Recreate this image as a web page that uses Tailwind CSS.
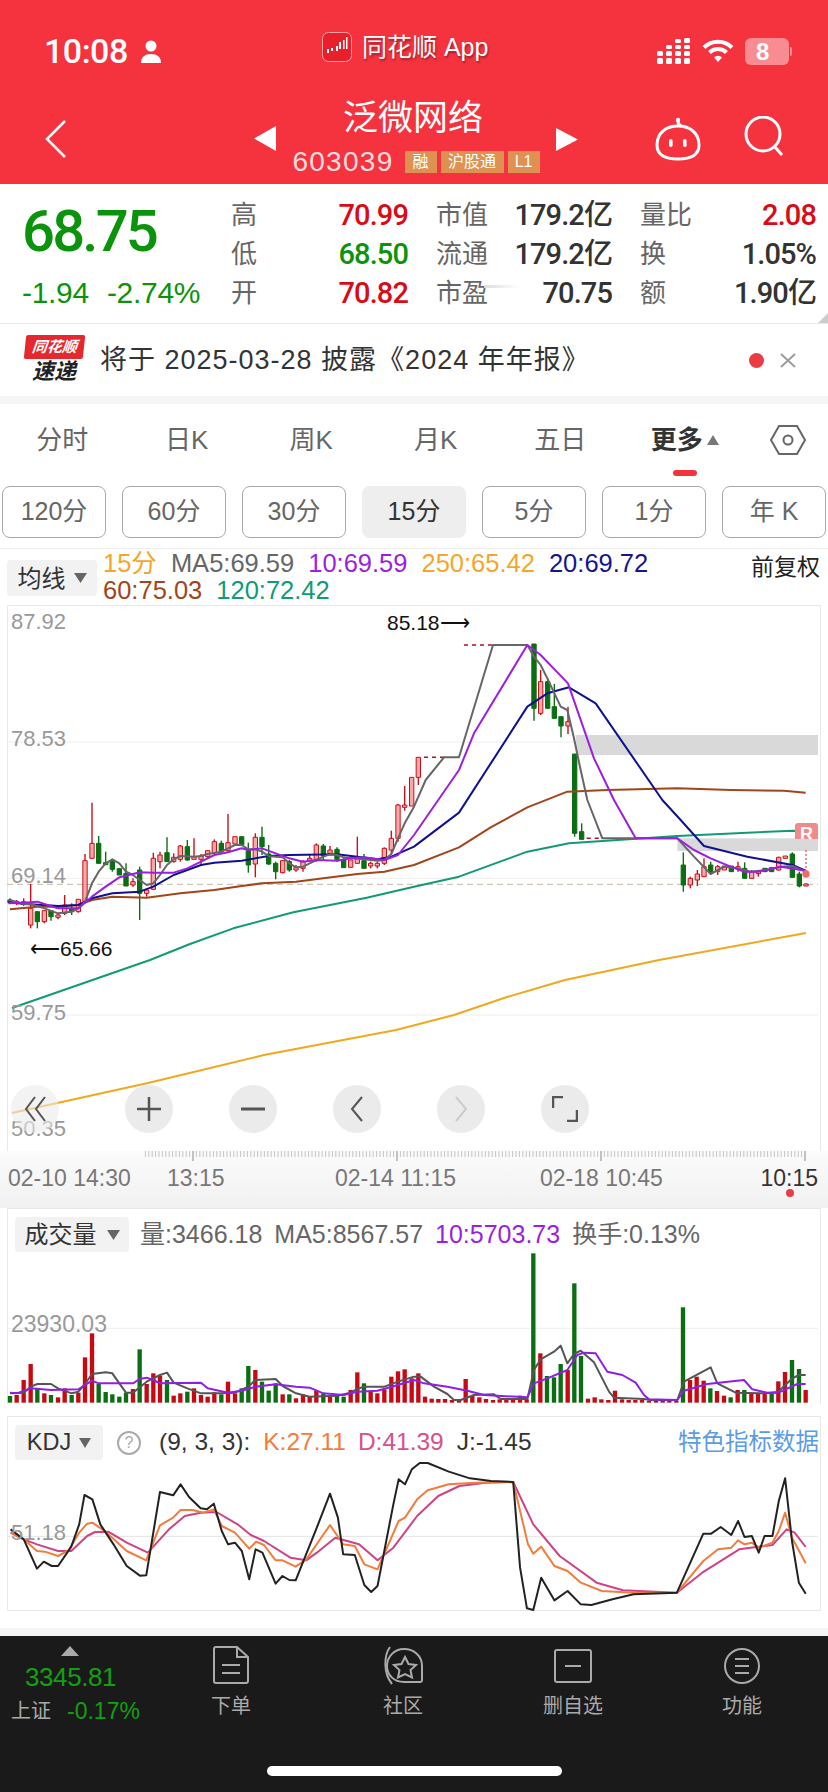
<!DOCTYPE html>
<html lang="zh-CN">
  <head>
    <meta charset="UTF-8" />
    <meta name="viewport" content="width=device-width, initial-scale=1.0" />
    <script src="https://cdn.jsdelivr.net/npm/@tailwindcss/browser@4"></script>
    <title>泛微网络</title>
  </head>
  <body class="w-[828px] h-[1792px] overflow-hidden flex flex-col bg-white font-['Liberation_Sans','Noto_Sans_CJK_SC',sans-serif]">
    <!-- red header -->
    <header class="h-[184px] shrink-0 bg-[#f4333f] text-white flex flex-col">
      <div class="h-[96px] grid grid-cols-[322px_auto_1fr] items-center pt-[6px]">
        <div class="flex items-center gap-[12px] pl-[44px]">
          <span class="text-[34px] font-['Roboto'] font-medium tracking-[-0.500px]">10:08</span>
          <svg width="22" height="23" viewBox="0 0 22 23" fill="#fff"><circle cx="11" cy="6" r="5.5" /><path d="M1 23c0-6 4-9 10-9s10 3 10 9z" /></svg>
        </div>
        <div class="flex items-center gap-[10px] -mt-[8px]">
          <svg width="30" height="30" viewBox="0 0 30 30"><rect x="0.5" y="0.5" width="29" height="29" rx="6" fill="#e8202c" stroke="#f9a0a5" /><path d="M5 17h2v4H5zM9 16h2v3H9zM14 14h2v5h-2zM17 10h2v7h-2zM21 8h1.500v9H21zM24 5h1.500v12H24z" fill="#fff" /></svg>
          <span class="text-[25px] leading-none [text-shadow:1px_2px_2px_rgba(0,0,0,0.35)]">同花顺 App</span>
        </div>
        <div class="flex items-center justify-end pr-[36px] gap-[11px]">
          <svg width="34" height="26" viewBox="0 0 34 26" fill="#fff">
            <rect x="0" y="20" width="6" height="6" rx="1.500" /><rect x="9" y="20" width="6" height="6" rx="1.500" /><rect x="18" y="20" width="6" height="6" rx="1.500" /><rect x="27" y="20" width="6" height="6" rx="1.500" />
            <rect x="0" y="13" width="6" height="5" rx="1.500" /><rect x="9" y="13" width="6" height="5" rx="1.500" /><rect x="18" y="13" width="6" height="5" rx="1.500" /><rect x="27" y="13" width="6" height="5" rx="1.500" />
            <rect x="9" y="7" width="6" height="4" rx="1.500" /><rect x="18" y="7" width="6" height="4" rx="1.500" /><rect x="27" y="7" width="6" height="4" rx="1.500" /><rect x="18" y="1" width="6" height="4" rx="1.500" /><rect x="27" y="0" width="6" height="5" rx="1.500" />
          </svg>
          <svg width="32" height="24" viewBox="0 0 32 24" fill="none" stroke="#fff" stroke-width="4"><path d="M2 8.500a20 20 0 0 1 28 0" /><path d="M7.500 13.500a12 12 0 0 1 17 0" /><path d="M16 23l-4-4.500a5.500 5.500 0 0 1 8 0z" fill="#fff" stroke="none" /></svg>
          <div class="flex items-center gap-[1px]">
            <div class="w-[44px] h-[27px] rounded-[6px] bg-[#f88c92] text-[24px] font-bold leading-[27px] pl-[11px]">8</div>
            <div class="w-[2px] h-[9px] rounded-r bg-[#f88c92]"></div>
          </div>
        </div>
      </div>
      <div class="h-[88px] grid grid-cols-[254px_324px_1fr]">
        <div class="pl-[45px] pt-[24px]">
          <svg width="22" height="38" viewBox="0 0 22 38" fill="none" stroke="#fff" stroke-width="2.500"><path d="M20 1L2 19l18 18" /></svg>
        </div>
        <div class="flex justify-between">
          <svg class="mt-[30px]" width="22" height="25" viewBox="0 0 22 25" fill="#fff"><path d="M22 0v25L0 12.500z" /></svg>
          <div class="flex flex-col items-center">
            <div class="h-[44px] text-[35px] leading-[44px] pr-[6px]">泛微网络</div>
            <div class="h-[44px] flex items-center gap-[4px]">
              <span class="text-[28px] tracking-[1.300px] mr-[7px] text-[#fbdcde]">603039</span>
              <span class="h-[22px] w-[32px] bg-[#de9150] text-[16px] leading-[22px] text-center">融</span>
              <span class="h-[22px] w-[63px] bg-[#de9150] text-[16px] leading-[22px] text-center">沪股通</span>
              <span class="h-[22px] w-[32px] bg-[#de9150] text-[16px] leading-[22px] text-center">L1</span>
            </div>
          </div>
          <svg class="mt-[32px]" width="22" height="23" viewBox="0 0 22 23" fill="#fff"><path d="M0 0v23l22-11.500z" /></svg>
        </div>
        <div class="flex pl-[77px] gap-[43px] pt-[21px]">
          <svg width="46" height="44" viewBox="0 0 46 44" fill="none" stroke="#fff" stroke-width="3"><circle cx="23" cy="3" r="2.200" fill="#fff" stroke="none" /><path d="M23 4c0 3 1 4 3 5" /><path d="M2 28C2 16 11 9 23 9s21 7 21 19c0 9-7 14-21 14S2 37 2 28z" /><rect x="14" y="22" width="3.600" height="8" rx="1.800" fill="#fff" stroke="none" /><rect x="28" y="22" width="3.600" height="8" rx="1.800" fill="#fff" stroke="none" /></svg>
          <svg class="-mt-[1px]" width="40" height="40" viewBox="0 0 40 40" fill="none" stroke="#fff" stroke-width="3"><circle cx="19" cy="18" r="17" /><path d="M31 31l7 8" /></svg>
        </div>
      </div>
    </header>

    <!-- quote summary -->
    <section class="relative h-[140px] shrink-0 border-b border-[#e8e8e8] flex">
      <div class="w-[231px] pl-[22px] text-[#0b930b]">
        <div class="h-[92px] pt-[16px] text-[58px] font-['Roboto'] font-medium leading-[62px] tracking-[-2.800px] whitespace-nowrap">68.75</div>
        <div class="flex gap-[18px] text-[30px] leading-[34px] tracking-[-0.300px] whitespace-nowrap"><span>-1.94</span><span>-2.74%</span></div>
      </div>
      <div class="flex-1 grid grid-cols-[177px_176px_176px] gap-x-[28px] grid-rows-[39px_39px_39px] pt-[12px] text-[26px] leading-[39px] text-[#666] whitespace-nowrap">
        <div class="flex justify-between"><span>高</span><span class="text-[29px] font-['Roboto'] font-medium text-[#d90b17] tracking-[-0.900px]">70.99</span></div>
        <div class="flex justify-between"><span>市值</span><span class="text-[29px] font-['Roboto','Noto_Sans_CJK_SC'] font-medium text-[#333] tracking-[-0.900px]">179.2亿</span></div>
        <div class="flex justify-between"><span>量比</span><span class="text-[29px] font-['Roboto'] font-medium text-[#d90b17] tracking-[-0.900px]">2.08</span></div>
        <div class="flex justify-between"><span>低</span><span class="text-[29px] font-['Roboto'] font-medium text-[#0b930b] tracking-[-0.900px]">68.50</span></div>
        <div class="flex justify-between"><span>流通</span><span class="text-[29px] font-['Roboto','Noto_Sans_CJK_SC'] font-medium text-[#333] tracking-[-0.900px]">179.2亿</span></div>
        <div class="flex justify-between"><span>换</span><span class="text-[29px] font-['Roboto'] font-medium text-[#333] tracking-[-0.900px]">1.05%</span></div>
        <div class="flex justify-between"><span>开</span><span class="text-[29px] font-['Roboto'] font-medium text-[#d90b17] tracking-[-0.900px]">70.82</span></div>
        <div class="flex justify-between"><span>市盈</span><span class="text-[29px] font-['Roboto'] font-medium text-[#333] tracking-[-0.900px]">70.75</span></div>
        <div class="flex justify-between"><span>额</span><span class="text-[29px] font-['Roboto','Noto_Sans_CJK_SC'] font-medium text-[#333] tracking-[-0.900px]">1.90亿</span></div>
      </div>
      <div class="absolute left-[484px] top-[101px] w-[36px] h-[3px] bg-gradient-to-r from-[#ddd] to-transparent"></div>
      <svg class="absolute right-0 bottom-0" width="10" height="10" viewBox="0 0 10 10" fill="#ccc"><path d="M10 0v10H0z" /></svg>
    </section>

    <!-- notice -->
    <section class="h-[72px] shrink-0 flex items-center pl-[24px] pr-[32px]">
      <div class="w-[60px] flex flex-col items-center">
        <div class="w-[59px] h-[24px] bg-[#e4282e] rounded-[2px] -skew-x-[6deg] text-white text-[15px] font-bold italic leading-[24px] text-center whitespace-nowrap">同花顺</div>
        <div class="text-[#222] text-[22px] font-bold italic leading-[26px]">速递</div>
      </div>
      <div class="ml-[16px] text-[27px] tracking-[1px] text-[#333] whitespace-nowrap">将于 2025-03-28 披露《2024 年年报》</div>
      <div class="ml-auto w-[15px] h-[15px] rounded-full bg-[#ea3c42]"></div>
      <svg class="ml-[16px]" width="16" height="15" viewBox="0 0 16 15" fill="none" stroke="#999" stroke-width="1.800"><path d="M1 1l14 13M15 1L1 14" /></svg>
    </section>
    <div class="h-[8px] shrink-0 bg-[#f5f5f5]"></div>

    <!-- period tabs -->
    <nav class="h-[72px] shrink-0 grid grid-cols-[repeat(6,124.500px)_1fr] items-center text-[26px] text-[#666] text-center">
      <div>分时</div>
      <div>日K</div>
      <div>周K</div>
      <div>月K</div>
      <div>五日</div>
      <div class="relative h-full flex items-center justify-center gap-[4px] font-bold text-[#333]">更多
        <svg width="12" height="10" viewBox="0 0 12 10" fill="#777"><path d="M6 0l6 10H0z" /></svg>
        <div class="absolute bottom-0 left-[50px] w-[24px] h-[6px] rounded-[3px] bg-[#f4333f]"></div>
      </div>
      <div class="flex justify-center">
        <svg width="36" height="30" viewBox="0 0 36 30" fill="none" stroke="#666" stroke-width="2"><path d="M9 1h18l8 14-8 14H9L1 15z" /><circle cx="18" cy="15" r="4.500" /></svg>
      </div>
    </nav>
    <div class="h-[52px] mt-[10px] shrink-0 flex gap-[16px] pl-[2px] text-[25px] text-[#666]">
      <div class="w-[104px] rounded-[8px] border border-[#aaa] flex items-center justify-center">120分</div>
      <div class="w-[104px] rounded-[8px] border border-[#aaa] flex items-center justify-center">60分</div>
      <div class="w-[104px] rounded-[8px] border border-[#aaa] flex items-center justify-center">30分</div>
      <div class="w-[104px] rounded-[8px] bg-[#eeeeee] text-[#333] flex items-center justify-center">15分</div>
      <div class="w-[104px] rounded-[8px] border border-[#aaa] flex items-center justify-center">5分</div>
      <div class="w-[104px] rounded-[8px] border border-[#aaa] flex items-center justify-center">1分</div>
      <div class="w-[104px] rounded-[8px] border border-[#aaa] flex items-center justify-center">年 K</div>
    </div>

    <!-- MA legend -->
    <div class="h-[57px] mt-[10px] shrink-0 border-t border-[#eee] relative text-[25.500px] leading-[27px] whitespace-nowrap">
      <div class="absolute left-[7px] top-[11px] w-[90px] h-[36px] rounded-[4px] bg-[#f2f2f2] flex items-center justify-center gap-[8px] text-[24px] text-[#333]">均线
        <svg width="13" height="10" viewBox="0 0 13 10" fill="#666"><path d="M0 0h13L6.500 10z" /></svg>
      </div>
      <div class="pl-[103px] pt-[1px]">
        <div class="flex gap-[14px]">
          <span class="text-[#f4a62a]">15分</span><span class="text-[#666]">MA5:69.59</span><span class="text-[#9b1fe0]">10:69.59</span><span class="text-[#f4a62a]">250:65.42</span><span class="text-[#15158f]">20:69.72</span>
        </div>
        <div class="flex gap-[14px]">
          <span class="text-[#a0461a]">60:75.03</span><span class="text-[#129a75]">120:72.42</span>
        </div>
      </div>
      <div class="absolute right-[8px] top-[5px] text-[23px] leading-[27px] text-[#222]">前复权</div>
    </div>

    <!-- candle chart -->
    <section class="relative h-[546px] shrink-0 mx-[7px] border-x border-t border-[#e8e8e8]">
      <svg id="kline" class="absolute -left-px -top-px" width="811" height="546" viewBox="21 15 2433 1638"></svg>
      <span class="absolute left-[3px] top-[3px] text-[22px] leading-[26px] text-[#999]">87.92</span>
      <span class="absolute left-[3px] top-[120px] text-[22px] leading-[26px] text-[#999]">78.53</span>
      <span class="absolute left-[3px] top-[257px] text-[22px] leading-[26px] text-[#999]">69.14</span>
      <span class="absolute left-[3px] top-[394px] text-[22px] leading-[26px] text-[#999]">59.75</span>
      <span class="absolute left-[3px] top-[510px] text-[22px] leading-[26px] text-[#999]">50.35</span>
      <span class="absolute left-[379px] top-[4px] text-[21px] leading-[26px] text-[#111] whitespace-nowrap">85.18⟶</span>
      <span class="absolute left-[22px] top-[330px] text-[21px] leading-[26px] text-[#111] whitespace-nowrap">⟵65.66</span>
      <div class="absolute left-[787px] top-[217px] w-[23px] h-[16px] rounded-t-[3px] bg-[#f28a8a] overflow-hidden text-white text-[18px] font-bold leading-[22px] text-center">R</div>
      <div class="absolute left-[3px] top-[479px] flex items-center gap-[56px]">
        <div class="w-[48px] h-[48px] rounded-full bg-[#ebebeb]/60 flex items-center justify-center mr-[10px]">
          <svg width="24" height="28" viewBox="0 0 24 28" fill="none" stroke="#555" stroke-width="2"><path d="M12 2L3 14l9 12M22 2l-9 12 9 12" /></svg>
        </div>
        <div class="w-[48px] h-[48px] rounded-full bg-[#ebebeb] flex items-center justify-center">
          <svg width="24" height="24" viewBox="0 0 24 24" fill="none" stroke="#555" stroke-width="2.500"><path d="M12 0v24M0 12h24" /></svg>
        </div>
        <div class="w-[48px] h-[48px] rounded-full bg-[#ebebeb] flex items-center justify-center">
          <svg width="24" height="4" viewBox="0 0 24 4" fill="none" stroke="#555" stroke-width="3"><path d="M0 2h24" /></svg>
        </div>
        <div class="w-[48px] h-[48px] rounded-full bg-[#ebebeb] flex items-center justify-center">
          <svg width="14" height="26" viewBox="0 0 14 26" fill="none" stroke="#555" stroke-width="2"><path d="M12 1L2 13l10 12" /></svg>
        </div>
        <div class="w-[48px] h-[48px] rounded-full bg-[#ebebeb] flex items-center justify-center">
          <svg width="14" height="26" viewBox="0 0 14 26" fill="none" stroke="#ccc" stroke-width="2"><path d="M2 1l10 12L2 25" /></svg>
        </div>
        <div class="w-[48px] h-[48px] rounded-full bg-[#ebebeb] flex items-center justify-center">
          <svg width="26" height="26" viewBox="0 0 26 26" fill="none" stroke="#555" stroke-width="2.500"><path d="M1 12V1h10M25 14v11H15" /></svg>
        </div>
      </div>
    </section>

    <!-- time axis -->
    <div class="relative h-[57px] shrink-0 bg-gradient-to-b from-[#fbfbfb] to-[#f1f1f1] text-[23px] leading-[26px] text-[#777] whitespace-nowrap">
      <svg id="ticks" class="absolute left-0 top-0" width="828" height="12"></svg>
      <span class="absolute left-[8px] top-[14px]">02-10 14:30</span>
      <span class="absolute left-[167px] top-[14px]">13:15</span>
      <span class="absolute left-[335px] top-[14px]">02-14 11:15</span>
      <span class="absolute left-[540px] top-[14px]">02-18 10:45</span>
      <span class="absolute right-[10px] top-[14px] text-[#333]">10:15</span>
      <div class="absolute left-[786px] top-[38px] w-[8px] h-[8px] rounded-full bg-[#ec3b46]"></div>
    </div>

    <!-- volume -->
    <section class="h-[196px] shrink-0 mx-[7px] border-x border-t border-[#e8e8e8] flex flex-col">
      <div class="h-[43px] shrink-0 flex items-center text-[25px] text-[#666] whitespace-nowrap pt-[8px] pl-[7px]">
        <div class="w-[114px] h-[35px] rounded-[4px] bg-[#f2f2f2] flex items-center justify-center gap-[10px] text-[24px] text-[#333]">成交量
          <svg width="13" height="10" viewBox="0 0 13 10" fill="#666"><path d="M0 0h13L6.500 10z" /></svg>
        </div>
        <span class="ml-[11px]">量:3466.18</span>
        <span class="ml-[12px]">MA5:8567.57</span>
        <span class="ml-[12px] text-[#9b1fe0]">10:5703.73</span>
        <span class="ml-[12px]">换手:0.13%</span>
      </div>
      <div class="relative">
        <svg id="vol" class="-ml-px block" width="811" height="151" viewBox="21 156 2433 453"></svg>
        <span class="absolute left-[3px] top-[59px] text-[23px] leading-[26px] text-[#999]">23930.03</span>
      </div>
    </section>
    <div class="h-[12px] shrink-0"></div>

    <!-- KDJ -->
    <section class="h-[195px] shrink-0 mx-[7px] border border-[#e8e8e8] flex flex-col">
      <div class="h-[43px] shrink-0 flex items-center text-[24.500px] whitespace-nowrap pt-[8px] pl-[7px]">
        <div class="w-[88px] h-[35px] rounded-[4px] bg-[#f2f2f2] flex items-center justify-center gap-[8px] text-[23.500px] text-[#333]">KDJ
          <svg width="12" height="10" viewBox="0 0 12 10" fill="#666"><path d="M0 0h12L6 10z" /></svg>
        </div>
        <div class="ml-[14px] w-[24px] h-[24px] rounded-full border-2 border-[#aaa] text-[#aaa] text-[16px] leading-[20px] text-center">?</div>
        <span class="ml-[18px] text-[#333]">(9, 3, 3):</span>
        <span class="ml-[13px] text-[#f27c3c]">K:27.11</span>
        <span class="ml-[12px] text-[#d94f8a]">D:41.39</span>
        <span class="ml-[13px] text-[#333]">J:-1.45</span>
        <span class="ml-auto mr-[1px] text-[23.500px] text-[#5b9be6]">特色指标数据</span>
      </div>
      <div class="relative">
        <svg id="kdj" class="-ml-px block" width="811" height="151" viewBox="13.260 177 1536 453" preserveAspectRatio="none"></svg>
        <span class="absolute left-[3px] top-[60px] text-[22px] leading-[26px] text-[#999]">51.18</span>
      </div>
    </section>
    <div class="h-[17px] shrink-0"></div>
    <div class="h-[8px] shrink-0 bg-[#f5f5f5]"></div>

    <!-- footer -->
    <footer class="relative flex-1 bg-[#1a1a1a] text-[#aaa] text-[20px]">
      <div class="flex">
        <div class="w-[145px] pl-[11px] pt-[10px] whitespace-nowrap">
          <svg class="ml-[50px]" width="18" height="10" viewBox="0 0 18 10" fill="#aaa"><path d="M9 0l9 10H0z" /></svg>
          <div class="text-[26px] leading-[36px] ml-[14px] mt-[3px] text-[#12a012] tracking-[-0.400px]">3345.81</div>
          <div class="flex items-center gap-[16px] leading-[26px] mt-[3px]"><span>上证</span><span class="text-[23px] text-[#12a012]">-0.17%</span></div>
        </div>
        <div class="w-[122px] ml-[25px] pt-[10px] flex flex-col items-center">
          <svg width="36" height="38" viewBox="0 0 36 38" fill="none" stroke="#aaa" stroke-width="2"><path d="M24 1H3a2 2 0 0 0-2 2v32a2 2 0 0 0 2 2h30a2 2 0 0 0 2-2V11zM24 1v10h11M9 19h18M9 27h18" /></svg>
          <span class="mt-[7px]">下单</span>
        </div>
        <div class="w-[180px] ml-[21px] pt-[10px] flex flex-col items-center">
          <svg width="42" height="40" viewBox="0 0 42 40" fill="none" stroke="#aaa" stroke-width="2"><path d="M8 1C2 9 1 27 10 38" /><path d="M22 3c10 0 18 7 18 17v14a2 2 0 0 1-2 2H22C12 36 5 29 5 20S12 3 22 3z" /><path d="M23 11l3.500 7 7.500 1-5.500 5 1.500 7.500-7-3.500-7 3.500 1.500-7.500-5.500-5 7.500-1z" /></svg>
          <span class="mt-[5px]">社区</span>
        </div>
        <div class="w-[120px] ml-[20px] pt-[13px] flex flex-col items-center">
          <svg width="38" height="34" viewBox="0 0 38 34" fill="none" stroke="#aaa" stroke-width="2"><rect x="1" y="1" width="36" height="32" rx="2" /><path d="M11 17h16" /></svg>
          <span class="mt-[8px]">删自选</span>
        </div>
        <div class="w-[120px] ml-[49px] pt-[12px] flex flex-col items-center">
          <svg width="36" height="36" viewBox="0 0 36 36" fill="none" stroke="#aaa" stroke-width="2"><circle cx="18" cy="18" r="17" /><path d="M11 11h14M11 18h14M11 25h14" /></svg>
          <span class="mt-[7px]">功能</span>
        </div>
      </div>
      <div class="absolute left-[267px] bottom-[16px] w-[295px] h-[10px] rounded-full bg-white"></div>
    </footer>

    <script>
      const NS = "http://www.w3.org/2000/svg";
      function el(svg, tag, attrs) {
        const n = document.createElementNS(NS, tag);
        for (const k in attrs) n.setAttribute(k, attrs[k]);
        n.setAttribute("vector-effect", "non-scaling-stroke");
        svg.appendChild(n);
        return n;
      }
      function line(svg, pts, color, w) {
        el(svg, "polyline", {
          points: pts.map((p) => p.join(",")).join(" "),
          fill: "none",
          stroke: color,
          "stroke-width": w || 2,
          "stroke-linejoin": "round",
        });
      }
      // points read off the reference; second half of each series is offset by 1242
      const shift = (pts) => pts.map((p) => [p[0] + 1242, p[1]]);

      const RED = "#c9101a";
      const GREEN = "#0b6e12";
      const kline = document.getElementById("kline");

      // grid and bands
      [426, 835, 1245].forEach((y) => el(kline, "line", { x1: 21, x2: 2454, y1: y, y2: y, stroke: "#eeeeee", "stroke-width": 1 }));
      el(kline, "rect", { x: 1727, y: 405, width: 727, height: 60, fill: "#d9d9d9" });
      el(kline, "rect", { x: 2032, y: 715, width: 422, height: 38, fill: "#d9d9d9" });
      el(kline, "line", { x1: 21, x2: 2454, y1: 853, y2: 853, stroke: "#c4b8a8", "stroke-width": 1, "stroke-dasharray": "6 4" });

      // dotted limit-up marks
      [[1272, 1332, 472], [1392, 1477, 135], [1760, 1805, 715]].forEach((d) =>
        el(kline, "line", { x1: d[0], x2: d[1], y1: d[2], y2: d[2], stroke: "#b01020", "stroke-width": 1.5, "stroke-dasharray": "4 4" })
      );

      // x, wick top, body top, body bottom, wick bottom, colour
      const candles = [
        [30,895,900,908,912,"g"],[50,900,905,910,915,"r"],[71,895,905,912,918,"r"],[92,852,925,975,985,"r"],[112,935,935,965,985,"g"],[133,932,932,965,970,"r"],[153,932,932,950,962,"g"],[174,940,945,952,958,"r"],[194,885,915,940,945,"r"],[215,910,925,935,945,"g"],[235,898,898,935,938,"r"],[255,762,782,905,908,"r"],[276,608,730,775,775,"r"],[296,708,730,790,790,"g"],[317,755,788,793,795,"g"],[337,780,785,808,815,"g"],[358,806,806,825,825,"g"],[378,790,820,858,858,"g"],[399,835,845,855,860,"r"],[419,800,810,880,960,"g"],[440,865,870,880,890,"r"],[460,758,775,868,870,"r"],[480,755,765,785,805,"r"],[501,712,758,785,785,"g"],[521,760,772,785,788,"r"],[541,735,738,778,785,"r"],[562,720,740,780,782,"g"],[582,715,770,778,778,"r"],[603,762,768,778,795,"r"],[623,752,752,770,775,"r"],[643,718,725,758,762,"r"],[664,722,730,755,760,"g"],[684,642,728,752,755,"r"],[705,710,710,732,732,"r"],[725,710,710,735,735,"g"],[745,728,752,795,818,"g"],[766,700,712,792,832,"r"],[786,680,712,740,765,"g"],[806,735,762,792,795,"g"],[827,785,790,815,838,"g"],[848,782,782,818,820,"r"],[868,780,785,810,815,"g"],[888,795,803,810,815,"r"],[909,780,785,805,815,"r"],[929,762,775,780,785,"r"],[949,730,735,778,785,"r"],[970,732,738,768,780,"g"],[990,738,750,760,765,"r"],[1011,742,748,778,785,"g"],[1031,775,778,803,803,"g"],[1052,780,780,802,802,"r"],[1072,710,775,790,790,"r"],[1092,762,782,805,805,"g"],[1112,785,790,798,805,"r"],[1132,785,790,798,805,"r"],[1153,742,745,790,795,"r"],[1174,692,715,750,760,"r"],[1194,612,615,715,725,"r"],[1214,558,615,622,632,"r"],[1235,532,532,618,618,"r"],
        [1255,472,472,532,555,"r"],[1602,132,132,325,362,"g"],[1622,210,245,340,345,"r"],[1643,235,245,325,325,"g"],[1663,252,320,355,355,"g"],[1683,350,350,378,412,"g"],[1704,320,365,378,402,"r"],[1724,462,462,700,710,"g"],[1745,670,695,718,718,"g"],[2050,757,795,855,875,"g"],[2071,830,835,855,865,"r"],[2092,810,822,840,858,"r"],[2112,775,800,830,830,"r"],[2132,785,795,818,825,"g"],[2153,795,800,815,825,"r"],[2173,798,798,810,810,"r"],[2194,798,798,815,815,"g"],[2214,785,800,805,815,"r"],[2234,787,805,835,835,"g"],[2255,810,815,835,835,"r"],[2275,810,815,820,830,"r"],[2295,805,805,815,815,"g"],[2315,803,803,815,815,"g"],[2336,770,772,810,812,"r"],[2356,768,768,775,775,"r"],[2377,757,762,832,832,"g"],[2398,815,822,858,862,"g"],[2418,850,852,858,858,"r"],
      ];
      candles.forEach(([x, wt, bt, bb, wb, c]) => {
        const col = c === "r" ? RED : GREEN;
        el(kline, "line", { x1: x, x2: x, y1: wt, y2: wb, stroke: col, "stroke-width": 1.4 });
        el(kline, "rect", {
          x: x - 6.5,
          y: bt,
          width: 13,
          height: Math.max(bb - bt, 6),
          fill: c === "r" ? "#f7a9a9" : GREEN,
          stroke: col,
          "stroke-width": 1,
        });
      });

      const ma5 = [[25,900],[50,905],[71,912],[92,912],[133,925],[174,940],[215,935],[235,925],[255,905],[276,850],[296,815],[317,790],[337,778],[358,790],[378,815],[399,825],[419,840],[440,855],[460,850],[480,825],[501,795],[521,778],[541,768],[582,770],[603,768],[623,762],[664,755],[684,745],[705,735],[725,735],[745,748],[766,748],[786,755],[806,768],[827,770],[848,772],[868,790],[888,802],[909,800],[929,790],[949,780],[970,770],[990,763],[1011,765],[1031,772],[1052,775],[1092,778],[1132,782],[1153,780],[1174,762],[1194,715],[1214,670],[1242,620]].concat(shift([[35,540],[90,472],[135,472],[237,135],[340,135],[360,170],[380,195],[400,235],[440,320],[460,330],[480,415],[500,510],[520,600],[565,715],[790,715],[840,770],[890,822],[930,800],[970,805],[1010,815],[1060,810],[1100,800],[1135,798],[1175,815]]));
      const ma10 = [[25,910],[71,908],[112,905],[133,912],[174,925],[215,925],[235,925],[255,908],[276,890],[317,860],[358,832],[399,822],[419,817],[460,818],[521,818],[562,805],[603,785],[643,765],[684,757],[725,745],[745,750],[786,745],[827,760],[868,775],[909,785],[949,780],[1011,782],[1052,775],[1092,772],[1153,780],[1194,765],[1242,705]].concat(shift([[135,510],[180,400],[340,135],[380,165],[462,250],[540,475],[600,600],[665,715],[790,715],[840,750],[890,775],[950,800],[990,815],[1030,815],[1100,800],[1175,812]]));
      const ma20 = [[25,905],[71,912],[133,915],[174,918],[235,915],[276,895],[337,880],[419,875],[460,860],[521,825],[603,795],[643,788],[725,782],[806,768],[868,765],[1011,763],[1072,770],[1132,778],[1174,770],[1242,740]].concat(shift([[135,638],[340,320],[400,280],[465,262],[545,310],[745,600],[800,660],[870,738],[1000,770],[1135,795],[1175,812]]));
      const ma60 = [[30,928],[112,920],[174,920],[235,915],[276,900],[337,890],[440,893],[541,880],[643,870],[725,858],[786,850],[888,845],[970,835],[1072,822],[1153,815],[1242,795]].concat(shift([[135,742],[230,682],[340,622],[460,575],[580,570],[790,565],[950,570],[1110,572],[1175,578]]));
      const ma120 = [[36,1224],[174,1176],[450,1080],[570,1032],[700,985],[880,937],[1100,893],[1242,860]].concat(shift([[135,830],[340,755],[465,730],[790,708],[1000,698],[1135,692],[1175,693]]));
      const ma250 = [[36,1539],[444,1449],[792,1365],[1188,1290],[1362,1245],[1521,1191],[1695,1140],[1977,1080],[2418,999]];
      line(kline, ma250, "#f0a81e");
      line(kline, ma120, "#129a75");
      line(kline, ma60, "#a0461a");
      line(kline, ma20, "#101090");
      line(kline, ma5, "#666666");
      line(kline, ma10, "#9b1fe0");
      el(kline, "line", { x1: 2418, x2: 2418, y1: 750, y2: 825, stroke: "#e0707a", "stroke-width": 1.5, "stroke-dasharray": "2 2" });
      el(kline, "circle", { cx: 2418, cy: 822, r: 11, fill: "#f06a6a" });

      // axis ticks
      const ticks = document.getElementById("ticks");
      for (let i = 0; i * 3.4 <= 660; i++) {
        const x = 805 - i * 3.4;
        const long = i % 60 === 0;
        el(ticks, "line", { x1: x, x2: x, y1: 0, y2: long ? 10 : 6, stroke: long ? "#888" : "#c4c4c4", "stroke-width": 1 });
      }

      // volume panel
      const vol = document.getElementById("vol");
      el(vol, "line", { x1: 21, x2: 2454, y1: 385, y2: 385, stroke: "#eeeeee", "stroke-width": 1 });
      const bars = [
        [30,588,"g"],[50,585,"r"],[71,540,"r"],[92,492,"r"],[112,565,"g"],[133,580,"r"],[153,585,"g"],[174,592,"r"],[194,565,"r"],[215,585,"g"],[235,578,"r"],[255,472,"r"],[276,400,"r"],[296,552,"g"],[317,576,"g"],[337,583,"g"],[358,590,"g"],[378,578,"g"],[399,567,"r"],[419,448,"g"],[440,552,"r"],[460,520,"r"],[480,527,"r"],[501,540,"g"],[521,587,"r"],[541,580,"r"],[562,575,"g"],[582,565,"r"],[603,585,"r"],[623,590,"r"],[643,577,"r"],[664,583,"g"],[684,545,"r"],[705,580,"r"],[725,565,"g"],[745,498,"g"],[766,510,"r"],[786,545,"g"],[806,572,"g"],[827,550,"g"],[848,583,"r"],[868,583,"g"],[888,595,"r"],[909,583,"r"],[929,590,"r"],[949,572,"r"],[970,582,"g"],[990,590,"r"],[1011,588,"g"],[1031,590,"g"],[1052,570,"r"],[1072,517,"r"],[1092,550,"g"],[1112,575,"r"],[1132,580,"r"],[1153,568,"r"],[1174,530,"r"],[1194,514,"r"],[1214,508,"r"],[1235,535,"r"],
        [1255,520,"r"],[1275,590,"r"],[1295,596,"r"],[1315,597,"r"],[1335,597,"r"],[1356,600,"r"],[1377,600,"r"],[1397,537,"r"],[1417,588,"r"],[1438,592,"r"],[1458,597,"r"],[1479,600,"r"],[1499,598,"r"],[1519,600,"r"],[1539,600,"r"],[1560,587,"r"],[1580,598,"r"],[1600,160,"g"],[1621,460,"r"],[1641,528,"g"],[1662,532,"g"],[1682,492,"g"],[1703,510,"r"],[1723,250,"g"],[1743,468,"g"],[1764,596,"r"],[1784,592,"r"],[1804,598,"r"],[1825,600,"r"],[1845,572,"r"],[1866,598,"r"],[1886,600,"r"],[1906,600,"r"],[1926,600,"r"],[1947,602,"r"],[1968,602,"r"],[1988,603,"r"],[2008,603,"r"],[2029,603,"r"],[2049,322,"g"],[2070,540,"r"],[2090,530,"r"],[2111,542,"r"],[2131,565,"g"],[2151,573,"r"],[2172,587,"r"],[2192,592,"g"],[2213,570,"r"],[2233,570,"g"],[2254,582,"r"],[2274,582,"r"],[2294,580,"r"],[2315,580,"g"],[2335,544,"r"],[2355,516,"r"],[2376,480,"g"],[2397,507,"g"],[2417,570,"r"],
      ];
      bars.forEach(([x, top, c]) =>
        el(vol, "rect", { x: x - 6.5, y: top, width: 13, height: 608 - top, fill: c === "r" ? "#c70a12" : "#0b6e12" })
      );
      line(vol, [[30,580],[71,578],[92,560],[112,552],[153,552],[174,565],[215,580],[235,575],[255,552],[276,522],[317,517],[337,520],[358,550],[378,578],[399,578],[440,545],[480,525],[501,518],[521,548],[562,565],[603,580],[664,580],[705,578],[745,560],[766,540],[827,537],[848,558],[888,580],[929,590],[1011,587],[1052,578],[1072,567],[1092,560],[1153,560],[1194,545],[1242,530]].concat(shift([[20,530],[60,560],[100,582],[120,600],[140,600],[180,585],[240,583],[260,597],[340,597],[360,510],[380,478],[420,455],[440,437],[460,490],[480,462],[500,452],[540,487],[585,575],[600,593],[690,597],[710,600],[790,600],[810,545],[890,502],[910,550],[965,578],[1040,580],[1090,578],[1135,535],[1155,525],[1175,525]])), "#555555");
      line(vol, [[30,578],[50,580],[92,565],[153,570],[235,568],[276,542],[296,550],[399,550],[419,537],[440,533],[460,540],[480,550],[603,548],[623,565],[684,578],[725,572],[766,560],[827,553],[888,560],[929,563],[970,580],[1031,585],[1072,575],[1132,572],[1194,555],[1242,540]].concat(shift([[30,550],[100,560],[160,572],[210,585],[340,592],[360,550],[400,535],[460,510],[490,465],[510,458],[545,460],[580,515],[625,525],[665,548],[690,585],[705,598],[790,600],[810,572],[880,552],[990,540],[1015,568],[1060,578],[1100,575],[1150,552],[1175,552]])), "#8f1ee6");

      // KDJ panel
      const kdj = document.getElementById("kdj");
      el(kdj, "line", { x1: 13, x2: 1550, y1: 406, y2: 406, stroke: "#e4e4e4", "stroke-width": 1 });
      line(kdj, [[20,395],[45,415],[70,430],[110,450],[135,450],[165,405],[180,393],[205,392],[240,425],[280,455],[320,385],[350,345],[380,335],[410,333],[450,370],[475,402],[500,420],[550,470],[580,478],[600,455],[635,410],[680,430],[715,478],[745,440],[790,345],[830,285],[870,255],[920,245],[972,243],[1010,370],[1060,465],[1130,545],[1180,568],[1282,575],[1330,515],[1400,445],[1463,432],[1490,385],[1505,395],[1526,438]], "#cf4286");
      line(kdj, [[20,395],[45,415],[70,450],[85,452],[110,465],[130,448],[150,395],[165,368],[175,365],[200,392],[240,450],[277,478],[303,373],[328,350],[342,327],[365,327],[385,335],[405,325],[420,375],[445,395],[472,443],[485,422],[500,432],[522,478],[535,478],[560,497],[580,475],[625,372],[650,430],[672,435],[690,490],[715,505],[755,360],[767,350],[790,295],[810,268],[850,250],[900,245],[972,243],[1000,430],[1010,458],[1025,437],[1050,495],[1075,510],[1100,545],[1140,570],[1200,575],[1282,575],[1332,480],[1360,445],[1385,440],[1398,418],[1410,430],[1424,425],[1437,440],[1463,425],[1475,390],[1487,335],[1500,410],[1526,487]], "#f27c3c");
      line(kdj, [[20,385],[45,415],[70,503],[83,482],[98,495],[110,495],[135,437],[150,370],[160,282],[175,295],[190,370],[215,430],[240,495],[265,524],[277,523],[303,273],[328,283],[342,250],[358,288],[380,322],[392,325],[405,308],[420,390],[432,430],[445,425],[458,450],[472,535],[484,445],[497,455],[522,548],[535,525],[548,537],[560,538],[600,380],[625,278],[640,350],[650,460],[672,462],[690,552],[703,573],[715,555],[745,310],[755,235],[767,250],[780,205],[795,186],[810,186],[850,212],[890,232],[930,240],[972,243],[985,500],[998,622],[1010,627],[1025,530],[1050,598],[1075,570],[1100,610],[1120,612],[1160,595],[1200,580],[1282,575],[1332,398],[1347,398],[1365,378],[1385,402],[1398,360],[1410,408],[1424,405],[1437,455],[1448,405],[1463,405],[1475,300],[1487,232],[1500,420],[1513,545],[1526,578]], "#222222");
    </script>
  </body>
</html>
